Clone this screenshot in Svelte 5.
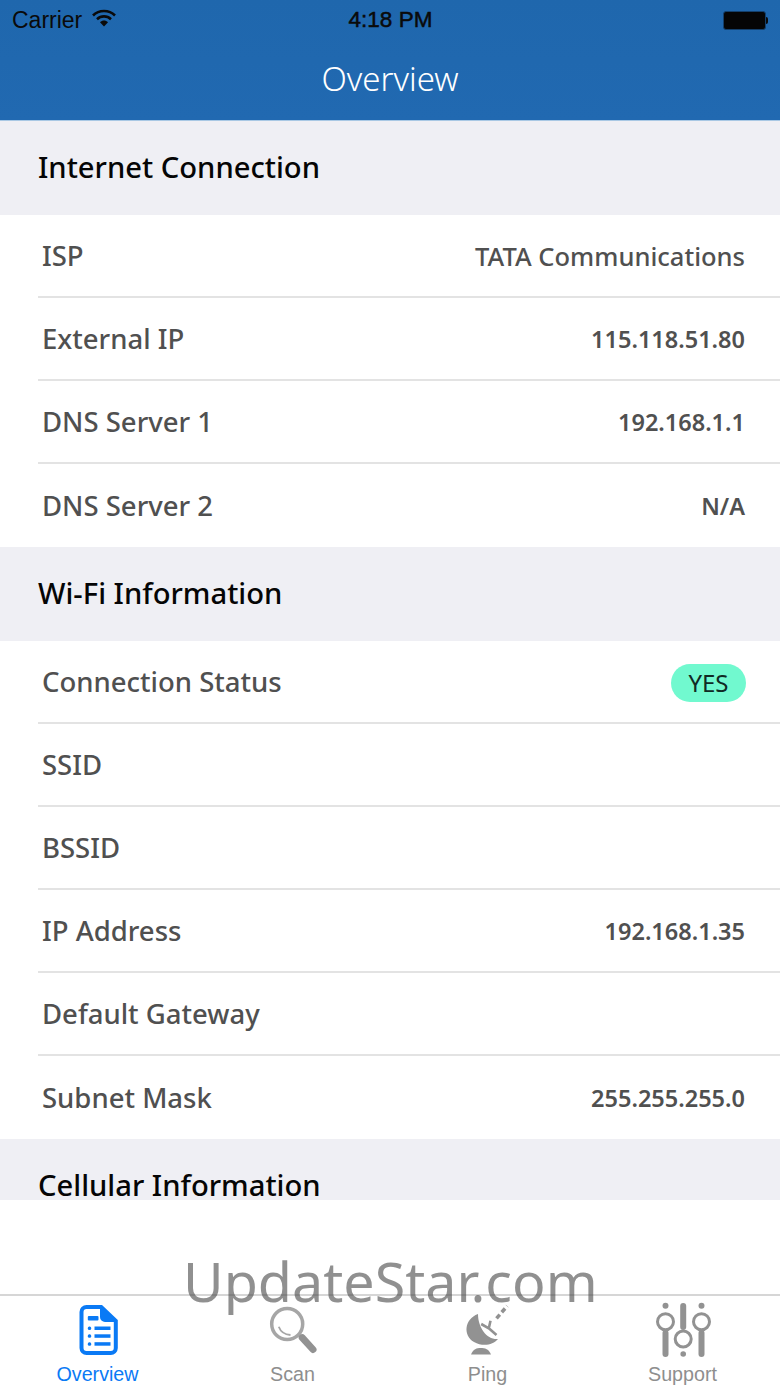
<script>
  const sections = [
    { title: 'Internet Connection', rows: [
      { k: 'ISP', v: 'TATA Communications', big: true },
      { k: 'External IP', v: '115.118.51.80' },
      { k: 'DNS Server 1', v: '192.168.1.1' },
      { k: 'DNS Server 2', v: 'N/A' }
    ]},
    { title: 'Wi-Fi Information', rows: [
      { k: 'Connection Status', pill: 'YES' },
      { k: 'SSID', v: '' },
      { k: 'BSSID', v: '' },
      { k: 'IP Address', v: '192.168.1.35' },
      { k: 'Default Gateway', v: '' },
      { k: 'Subnet Mask', v: '255.255.255.0' }
    ]},
    { title: 'Cellular Information', rows: [] }
  ];
</script>

<div class="screen">
  <header class="top">
    <div class="status">
      <div class="st-left">
        <span>Carrier</span>
        <svg class="wifi" width="24" height="18" viewBox="0 0 24 18">
          <path d="M1 6.500C7 .5 17 .5 23 6.500" fill="none" stroke="#0a0a0a" stroke-width="2.600"/>
          <path d="M5 10.200C9 6.400 15 6.400 19 10.200" fill="none" stroke="#0a0a0a" stroke-width="2.600"/>
          <path d="M8 13.200C10.500 11 13.500 11 16 13.200L12 17.500Z" fill="#0a0a0a"/>
        </svg>
      </div>
      <div class="clock">4:18 PM</div>
      <div class="st-right">
        <span class="batt"></span><span class="nub"></span>
      </div>
    </div>
    <div class="nav">Overview</div>
  </header>

  <div class="body">
    <main class="content">
      {#each sections as s}
        <h2 class="sec">{s.title}</h2>
        {#each s.rows as r, i}
          <div class="row" class:last={i === s.rows.length - 1}>
            <span class="k">{r.k}</span>
            {#if r.pill}
              <span class="pill">{r.pill}</span>
            {:else}
              <span class="v" class:big={r.big}>{r.v}</span>
            {/if}
          </div>
        {/each}
      {/each}
    </main>
  </div>

  <nav class="tabs">
    <div class="tab active">
      <svg width="60" height="60" viewBox="0 0 60 60" fill="#0a7af5">
        <path fill-rule="evenodd" d="M18.500 7H34L49.800 22V50a7 7 0 0 1-7 7H18.500a7 7 0 0 1-7-7V14a7 7 0 0 1 7-7ZM18.500 11a3 3 0 0 0-3 3V50a3 3 0 0 0 3 3H42.800a3 3 0 0 0 3-3V24H37a5 5 0 0 1-5-5V11Z"/>
        <rect x="19.800" y="18" width="10.700" height="4.500" rx="1"/>
        <rect x="19.800" y="28.500" width="3.400" height="3.500" rx="1.500"/>
        <rect x="26.500" y="28.500" width="16" height="3.500"/>
        <rect x="19.800" y="36.300" width="3.400" height="3.500" rx="1.500"/>
        <rect x="26.500" y="36.300" width="16" height="3.500"/>
        <rect x="19.800" y="44.200" width="3.400" height="3.500" rx="1.500"/>
        <rect x="26.500" y="44.200" width="16" height="3.500"/>
      </svg>
      <span>Overview</span>
    </div>
    <div class="tab">
      <svg width="60" height="60" viewBox="0 0 60 60" fill="none">
        <circle cx="24.200" cy="26" r="15.500" stroke="#a6a6a6" stroke-width="3.500"/>
        <path d="M15.800 28.700C17.500 33.500 22 36.500 27.500 37" stroke="#a6a6a6" stroke-width="1.800"/>
        <path d="M39.200 39.700L50 51.500" stroke="#929292" stroke-width="7" stroke-linecap="round"/>
      </svg>
      <span>Scan</span>
    </div>
    <div class="tab">
      <svg width="60" height="60" viewBox="0 0 60 60" fill="#929292">
        <path d="M20 16C6 21 5 38 16 44C25 49 35 47 40 41C29 42 20 30 20 16Z"/>
        <path d="M30.800 30.300L32.500 22.700M30.800 30.300L23.200 26M30.800 30.300L38.500 37" stroke="#929292" stroke-width="2.600" fill="none"/>
        <path d="M38.500 20.300L49.200 8" stroke="#929292" stroke-width="3.500" stroke-dasharray="5 3" fill="none"/>
        <path d="M13 56.500C15 51 19 50 22.500 50C27 50 31 51 33 56.500Z"/>
      </svg>
      <span>Ping</span>
    </div>
    <div class="tab">
      <svg width="60" height="60" viewBox="0 0 60 60" fill="#929292">
        <circle cx="12.500" cy="7.700" r="3"/>
        <circle cx="48.500" cy="7.700" r="3"/>
        <circle cx="30.200" cy="56" r="2.800"/>
        <rect x="9.500" y="32" width="6" height="27" rx="3"/>
        <rect x="27.200" y="5" width="6" height="27" rx="3"/>
        <rect x="45.500" y="32" width="6" height="27" rx="3"/>
        <g fill="none" stroke="#929292" stroke-width="3">
          <circle cx="12.500" cy="23.700" r="8"/>
          <circle cx="48.500" cy="23.700" r="8"/>
          <circle cx="30.200" cy="41" r="8"/>
        </g>
      </svg>
      <span>Support</span>
    </div>
  </nav>

  <div class="mark">UpdateStar.com</div>
</div>

<style>
  :global(body) { margin: 0; background: #fff; }
  .screen {
    position: relative;
    width: 780px;
    height: 1387px;
    display: flex;
    flex-direction: column;
    overflow: hidden;
    background: #fff;
    font-family: "Noto Sans", "Open Sans", sans-serif;
  }
  .top {
    flex: none;
    background: linear-gradient(#1f67ad, #2169b1);
    border-bottom: 1px solid #a9c8e4;
  }
  .status {
    height: 40px;
    display: grid;
    grid-template-columns: 1fr auto 1fr;
    align-items: center;
    padding: 0 12px 0 12px;
    font-family: "Liberation Sans", sans-serif;
    font-size: 23px;
    color: #0a0a0a;
  }
  .st-left { display: flex; align-items: center; gap: 10px; }
  .wifi { margin-top: -4px; }
  .clock { font-size: 22.500px; -webkit-text-stroke: .5px #0a0a0a; margin-left: 1px; }
  .st-right { display: flex; justify-content: flex-end; align-items: center; }
  .batt { width: 41px; height: 17px; background: #050505; border-radius: 3px; border: 1px solid #14406c; }
  .nub { width: 2px; height: 7px; background: #0a0a0a; border-radius: 0 2px 2px 0; }
  .nav {
    height: 80px;
    text-align: center;
    line-height: 77px;
    color: #fff;
    font-size: 33px;
    font-weight: 300;
  }
  .body { flex: 1; min-height: 0; }
  .content { height: 1079px; overflow: hidden; }
  .sec {
    margin: 0;
    height: 94px;
    line-height: 92px;
    padding-left: 38px;
    background: #efeff4;
    color: #050505;
    font-size: 29.200px;
    font-weight: 500;
  }
  .row {
    height: 83px;
    margin-left: 38px;
    padding: 0 35px 0 4px;
    box-sizing: border-box;
    border-bottom: 2px solid #e3e3e3;
    display: flex;
    justify-content: space-between;
    align-items: center;
    color: #505050;
  }
  .row.last { border-bottom: 0; }
  .k { font-size: 27.500px; font-weight: 500; }
  .v { font-size: 23.500px; font-weight: 600; }
  .v.big { font-size: 25.500px; font-weight: 500; }
  .pill {
    width: 75px;
    height: 38px;
    border-radius: 19px;
    background: #71f9cf;
    color: #102a24;
    font-size: 24px;
    line-height: 38px;
    text-align: center;
    margin: 2px -1px 0 0;
  }
  .tabs {
    flex: none;
    height: 93px;
    border-top: 2px solid #d6d6d6;
    box-sizing: border-box;
    display: grid;
    grid-template-columns: repeat(4, 1fr);
  }
  .tab {
    display: flex;
    flex-direction: column;
    align-items: center;
    justify-content: flex-end;
    gap: 4px;
    padding-bottom: 1px;
    color: #8e8e8e;
    font-family: "Liberation Sans", sans-serif;
    font-size: 19.700px;
    line-height: 24px;
    overflow: hidden;
  }
  .tab.active { color: #0a7af5; }
  .mark {
    position: absolute;
    left: 183px;
    top: 1241px;
    font-size: 55.600px;
    line-height: 80px;
    font-weight: 400;
    color: rgba(70, 70, 70, .6);
    white-space: nowrap;
  }
</style>
